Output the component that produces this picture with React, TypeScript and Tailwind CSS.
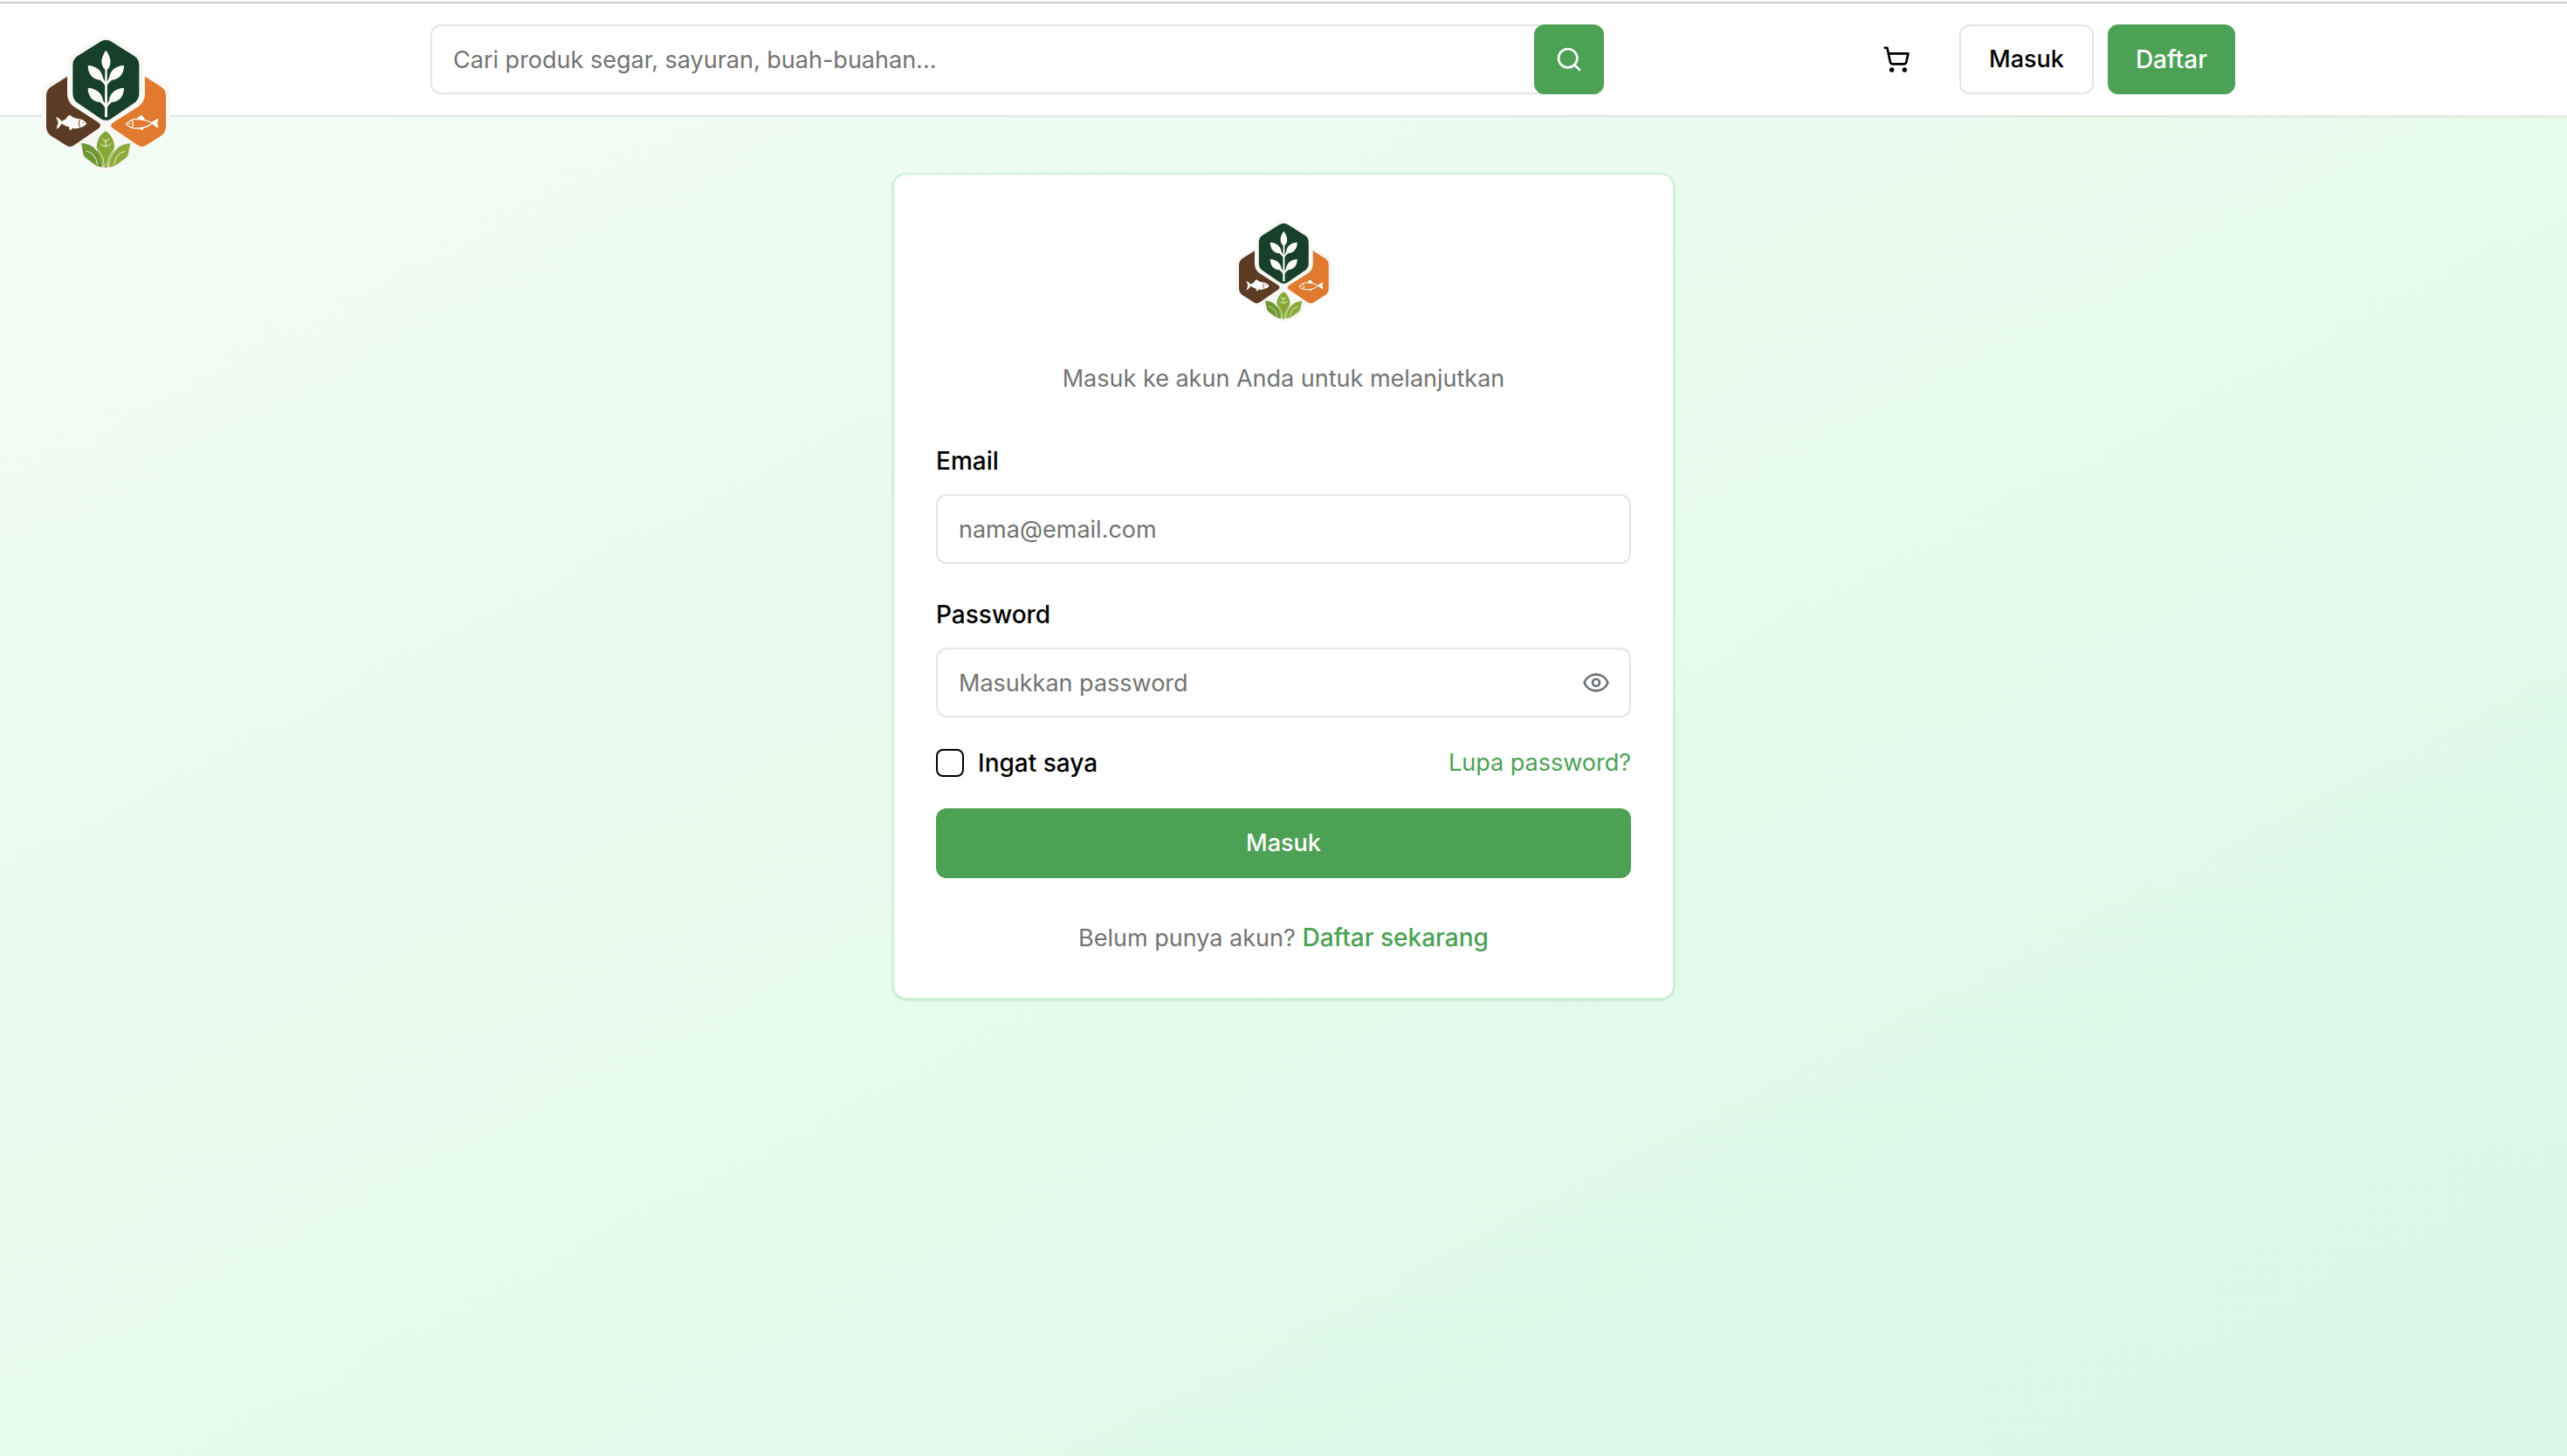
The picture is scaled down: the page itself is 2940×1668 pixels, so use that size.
import { useState } from 'react';
import type { FormEvent } from 'react';
import { Eye, EyeOff, Search, ShoppingCart } from 'lucide-react';
import clsx from 'clsx';

const inputClass =
  'h-20 w-full rounded-xl border-2 border-[#e5e5e5] bg-white px-6 text-[27px] text-black placeholder:text-[#737373] focus:border-[#4ca154] focus:outline-none';

function Logo({ className }: { className?: string }) {
  return (
    <svg viewBox="33 54 480 480" className={clsx('shrink-0', className)} role="img" aria-label="Logo">
      {/* Off-white backing */}
      <g fill="#f7f7f3" stroke="#f7f7f3" strokeWidth="30" strokeLinejoin="round">
        <path d="M260 82 Q274 74 288 82 L376 138 Q388 146 388 160 V205 L468 240 Q480 248 480 262 V376 L396 440 L357 434 L350 475 L300 510 Q274 520 248 510 L198 475 L190 434 L152 440 L69 376 V262 Q69 248 82 240 L160 205 V160 Q160 146 172 138 Z" />
      </g>

      {/* Brown and orange tiles */}
      <path d="M141 203 V262 Q141 290 162 305 L250 362 Q260 371 250 380 L166 438 Q153 448 140 441 L86 407 Q69 396 69 376 V270 Q69 250 84 239 Z" fill="#5b3b23" />
      <path d="M408 203 V262 Q408 290 387 305 L297 362 Q286 371 297 380 L382 438 Q396 448 409 441 L463 407 Q480 396 480 376 V270 Q480 250 465 239 Z" fill="#e07a2f" />

      {/* Green tile with sprig */}
      <path d="M255 83 Q274 72 293 83 L372 133 Q388 144 388 164 V262 Q388 282 372 293 L293 347 Q274 360 255 347 L176 293 Q160 282 160 262 V164 Q160 144 176 133 Z" fill="#173f29" />
      <g fill="#fbfcf8">
        <path d="M271 170 H278 L279 343 H270 Z" />
        <path d="M274 113 C262 130 257 146 260 160 C262 170 268 178 275 182 C282 178 287 170 289 160 C291 146 287 130 274 113 Z" />
        <path d="M212 165 C240 166 260 182 264 208 Q270 218 274 230 V238 Q266 224 254 215 C230 214 212 196 212 165 Z" />
        <path d="M336 165 C308 166 288 182 285 208 Q279 218 275 230 V238 Q282 224 294 215 C318 214 336 196 336 165 Z" />
        <path d="M212 242 C240 243 260 259 264 284 Q270 294 274 306 V316 Q266 300 254 291 C230 290 212 273 212 242 Z" />
        <path d="M336 242 C308 243 288 259 285 284 Q279 294 275 306 V316 Q282 300 294 291 C318 290 336 273 336 242 Z" />
      </g>

      {/* Left fish */}
      <path d="M101 342 Q112 343 122 357 Q128 353 137 349 Q140 338 151 335 Q157 343 172 347 Q198 347 208 365 Q198 377 180 380 Q166 383 158 380 L155 388 L147 384 L149 377 Q133 373 122 365 Q114 379 104 384 Q107 370 110 361 Q107 350 101 342 Z" fill="#fbfcf8" />
      <path d="M184 351 Q176 364 185 377" fill="none" stroke="#5b3b23" strokeWidth="3" />
      <circle cx="195" cy="361" r="2" fill="#5b3b23" />

      {/* Right fish, outlined */}
      <g fill="none" stroke="#fbfcf8" strokeWidth="4" strokeLinejoin="round">
        <path d="M344 367 Q356 350 377 349 Q406 349 433 363 Q418 378 387 381 Q356 382 344 367 Z" />
        <path d="M362 353 Q372 366 363 378" />
        <path d="M384 347 Q388 340 397 338 Q402 344 406 351 Z" fill="#fbfcf8" />
        <path d="M431 362 Q440 356 452 350 Q446 362 452 377 Q440 371 431 362" fill="#fbfcf8" />
        <path d="M391 381 L399 386 L401 379" />
      </g>
      <circle cx="355" cy="365" r="3" fill="#fbfcf8" />

      {/* Lime leaves */}
      <path d="M189 432 C222 434 252 448 262 514 Q246 514 232 503 L206 484 Q196 477 195 462 Z" fill="#6f9632" />
      <path d="M358 433 C325 436 296 448 284 514 Q300 514 315 503 L341 484 Q351 477 352 462 Z" fill="#8dab3b" />
      <path d="M273 391 Q287 398 297 418 Q311 446 292 478 L280 515 Q273 518 265 514 L252 478 Q234 446 249 416 Q259 398 273 391 Z" fill="#86a836" />
      <g fill="none" stroke="#eef4dc" strokeWidth="3" strokeLinecap="round">
        <path d="M207 459 Q238 465 245 505" />
        <path d="M338 460 Q309 466 302 505" />
        <path d="M245 452 Q266 474 268 511" />
        <path d="M304 452 Q282 474 278 511" />
        <path d="M273 420 V446 M262 417 Q265 424 273 426 Q281 424 284 417 M255 435 Q262 444 273 441 Q285 444 292 434" />
      </g>
    </svg>
  );
}

export default function LoginPage() {
  const [keyword, setKeyword] = useState('');
  const [email, setEmail] = useState('');
  const [password, setPassword] = useState('');
  const [remember, setRemember] = useState(false);
  const [showPassword, setShowPassword] = useState(false);

  const handleSubmit = (e: FormEvent) => {
    e.preventDefault();
  };

  return (
    <div className="flex min-h-screen flex-col bg-white font-['Inter','Liberation_Sans',sans-serif] text-[28px] leading-10 text-black">
      {/* --- Header --- */}
      <header className="relative mt-[2px] border-y-2 border-t-[#cbcbcb] border-b-[#e3e5e3] bg-white">
        <a href="#" aria-label="Beranda" className="absolute top-[34px] left-[41px]">
          <Logo className="size-40" />
        </a>
        <div className="flex items-center justify-between py-6 pr-[380px] pl-[493px]">
          <form onSubmit={handleSubmit} className="relative w-full max-w-[1344px]">
            <input
              type="search"
              aria-label="Cari produk"
              placeholder="Cari produk segar, sayuran, buah-buahan..."
              value={keyword}
              onChange={(e) => setKeyword(e.target.value)}
              className={inputClass}
            />
            <button
              type="submit"
              aria-label="Cari"
              className="absolute top-0 right-0 flex size-20 items-center justify-center rounded-xl bg-[#4ca154] text-white"
            >
              <Search className="size-8" />
            </button>
          </form>
          <div className="flex items-center gap-4">
            <button type="button" aria-label="Keranjang" className="mr-4 flex size-20 items-center justify-center">
              <ShoppingCart className="size-8" />
            </button>
            <a href="#" className="flex h-20 items-center rounded-xl border-2 border-[#e5e5e5] bg-white px-8 text-[27px] font-medium">
              Masuk
            </a>
            <a href="#" className="flex h-20 items-center rounded-xl bg-[#4ca154] px-8 font-medium text-white">
              Daftar
            </a>
          </div>
        </div>
      </header>

      {/* --- Login --- */}
      <main className="flex flex-1 items-start justify-center bg-gradient-to-br from-[#f2fdf5] via-[#e5fbec] to-[#daf8e8] px-8 py-16">
        <div className="w-full max-w-4xl rounded-2xl border-2 border-[#c8f3d6] bg-white p-12 shadow-sm">
          <div className="mb-[54px] flex flex-col items-center gap-11 pt-[2px]">
            <Logo className="size-[120px]" />
            <p className="text-[27px] text-[#737373]">Masuk ke akun Anda untuk melanjutkan</p>
          </div>

          <form onSubmit={handleSubmit}>
            <div className="mb-[38px] flex flex-col gap-[18px]">
              <label htmlFor="email" className="font-medium">
                Email
              </label>
              <input
                id="email"
                type="email"
                placeholder="nama@email.com"
                value={email}
                onChange={(e) => setEmail(e.target.value)}
                className={inputClass}
              />
            </div>

            <div className="mb-8 flex flex-col gap-[18px]">
              <label htmlFor="password" className="font-medium">
                Password
              </label>
              <div className="relative">
                <input
                  id="password"
                  type={showPassword ? 'text' : 'password'}
                  placeholder="Masukkan password"
                  value={password}
                  onChange={(e) => setPassword(e.target.value)}
                  className={inputClass}
                />
                <button
                  type="button"
                  onClick={() => setShowPassword(!showPassword)}
                  aria-label={showPassword ? 'Sembunyikan password' : 'Tampilkan password'}
                  className="absolute inset-y-0 right-6 flex items-center text-[#6b7075]"
                >
                  {showPassword ? <EyeOff className="size-8" /> : <Eye className="size-8" />}
                </button>
              </div>
            </div>

            <div className="mb-8 flex items-center justify-between">
              <div className="flex items-center gap-4">
                <input
                  id="remember"
                  type="checkbox"
                  checked={remember}
                  onChange={(e) => setRemember(e.target.checked)}
                  className="size-8 appearance-none rounded-lg border-2 border-black bg-white checked:bg-[#4ca154]"
                />
                <label htmlFor="remember" className="font-medium">
                  Ingat saya
                </label>
              </div>
              <a href="#" className="text-[27px] text-[#4ca154]">
                Lupa password?
              </a>
            </div>

            <button type="submit" className="h-20 w-full rounded-xl bg-[#4ca154] text-[27px] font-medium text-white">
              Masuk
            </button>
          </form>

          <p className="mt-12 text-center text-[27px] text-[#737373]">
            Belum punya akun?{' '}
            <a href="#" className="text-[28px] font-medium text-[#4ca154]">
              Daftar sekarang
            </a>
          </p>
        </div>
      </main>
    </div>
  );
}
